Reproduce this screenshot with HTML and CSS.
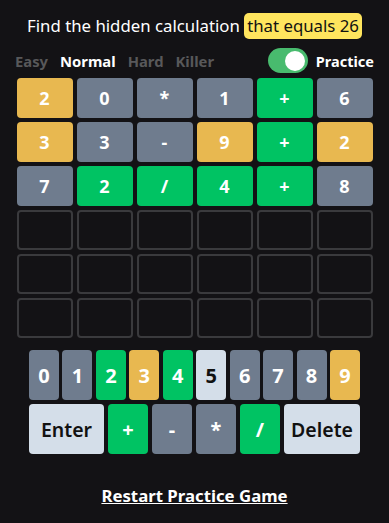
FILE: index.html
```html
<!DOCTYPE html>
<html>
<head>
<meta charset="utf-8">
<link rel="stylesheet" href="styles.css">
</head>
<body>
<div class="app">
  <h1 class="title">Find the hidden calculation <span class="target">that equals 26</span></h1>
  <div class="controls">
    <div class="levels">
      <span class="level">Easy</span>
      <span class="level active">Normal</span>
      <span class="level">Hard</span>
      <span class="level">Killer</span>
    </div>
    <div class="practice">
      <span class="toggle"><span class="knob"></span></span>
      <span class="practice-label">Practice</span>
    </div>
  </div>
  <div class="board">
    <div class="tile y">2</div><div class="tile g">0</div><div class="tile g">*</div><div class="tile g">1</div><div class="tile c">+</div><div class="tile g">6</div>
    <div class="tile y">3</div><div class="tile g">3</div><div class="tile g">-</div><div class="tile y">9</div><div class="tile c">+</div><div class="tile y">2</div>
    <div class="tile g">7</div><div class="tile c">2</div><div class="tile c">/</div><div class="tile c">4</div><div class="tile c">+</div><div class="tile g">8</div>
    <div class="tile e"></div><div class="tile e"></div><div class="tile e"></div><div class="tile e"></div><div class="tile e"></div><div class="tile e"></div>
    <div class="tile e"></div><div class="tile e"></div><div class="tile e"></div><div class="tile e"></div><div class="tile e"></div><div class="tile e"></div>
    <div class="tile e"></div><div class="tile e"></div><div class="tile e"></div><div class="tile e"></div><div class="tile e"></div><div class="tile e"></div>
  </div>
  <div class="keyboard">
    <div class="keyrow digits">
      <button class="key g">0</button><button class="key g">1</button><button class="key c">2</button><button class="key y">3</button><button class="key c">4</button><button class="key l">5</button><button class="key g">6</button><button class="key g">7</button><button class="key g">8</button><button class="key y">9</button>
    </div>
    <div class="keyrow ops">
      <button class="key l wide enter">Enter</button><button class="key c op">+</button><button class="key g op">-</button><button class="key g op">*</button><button class="key c op">/</button><button class="key l wide delete">Delete</button>
    </div>
  </div>
  <div class="footer"><a class="restart" href="#">Restart Practice Game</a></div>
</div>
</body>
</html>
```
FILE: styles.css
```css
* { box-sizing: border-box; }
html, body {
  margin: 0;
  background: #131215;
  font-family: "Noto Sans", "DejaVu Sans", sans-serif;
  color: #ffffff;
}
.app {
  width: 389px;
  height: 523px;
  display: flex;
  flex-direction: column;
  align-items: center;
}
.title {
  margin: 14px 0 0;
  font-size: 16.8px;
  font-weight: 400;
  line-height: 24px;
  height: 24px;
  white-space: nowrap;
}
.target {
  background: #ffe55e;
  color: #111;
  border-radius: 5px;
  padding: 1px 3px 2px;
}
.controls {
  width: 359px;
  margin-top: 10px;
  height: 25px;
  display: flex;
  align-items: center;
  justify-content: space-between;
}
.levels {
  display: flex;
  gap: 12px;
  font-weight: 700;
  font-size: 14.8px;
}
.level { color: #58585a; }
.level.active { color: #ffffff; }
.practice {
  display: flex;
  align-items: center;
  gap: 8px;
}
.toggle {
  width: 40px;
  height: 25px;
  border-radius: 13px;
  background: #48bb6e;
  display: flex;
  align-items: center;
  justify-content: flex-end;
  padding-right: 3px;
}
.knob {
  width: 20px;
  height: 20px;
  border-radius: 50%;
  background: #fff;
}
.practice-label {
  font-weight: 700;
  font-size: 14.5px;
}
.board {
  margin-top: 5px;
  display: grid;
  grid-template-columns: repeat(6, 56px);
  grid-auto-rows: 40px;
  gap: 4px;
}
.tile {
  border-radius: 4px;
  display: flex;
  align-items: center;
  justify-content: center;
  font-weight: 700;
  font-size: 18px;
  color: #fff;
}
.tile.y { background: #e8b850; }
.tile.g { background: #6f7c8e; }
.tile.c { background: #00c363; }
.tile.e { border: 2px solid #3a3a3d; }
.keyboard {
  margin-top: 12px;
  width: 331px;
  display: flex;
  flex-direction: column;
  gap: 4px;
}
.keyrow {
  display: flex;
  height: 50px;
}
.digits { gap: 3.44px; }
.ops { gap: 4px; }
.key {
  border: 0;
  border-radius: 4px;
  font-family: inherit;
  font-weight: 700;
  font-size: 20px;
  color: #fff;
  padding: 0;
  display: flex;
  align-items: center;
  justify-content: center;
}
.digits .key { flex: 1; }
.key.y { background: #e8b850; }
.key.g { background: #6f7c8e; }
.key.c { background: #00c363; }
.key.l { background: #d4dee9; color: #111; }
.key.op { width: 40px; }
.key.wide { font-weight: 600; font-size: 19.5px; }
.enter { width: 75px; }
.delete { width: 76px; }
.footer {
  margin-top: 30px;
}
.restart {
  color: #fff;
  font-weight: 700;
  font-size: 16.8px;
  text-decoration: underline;
}
```
